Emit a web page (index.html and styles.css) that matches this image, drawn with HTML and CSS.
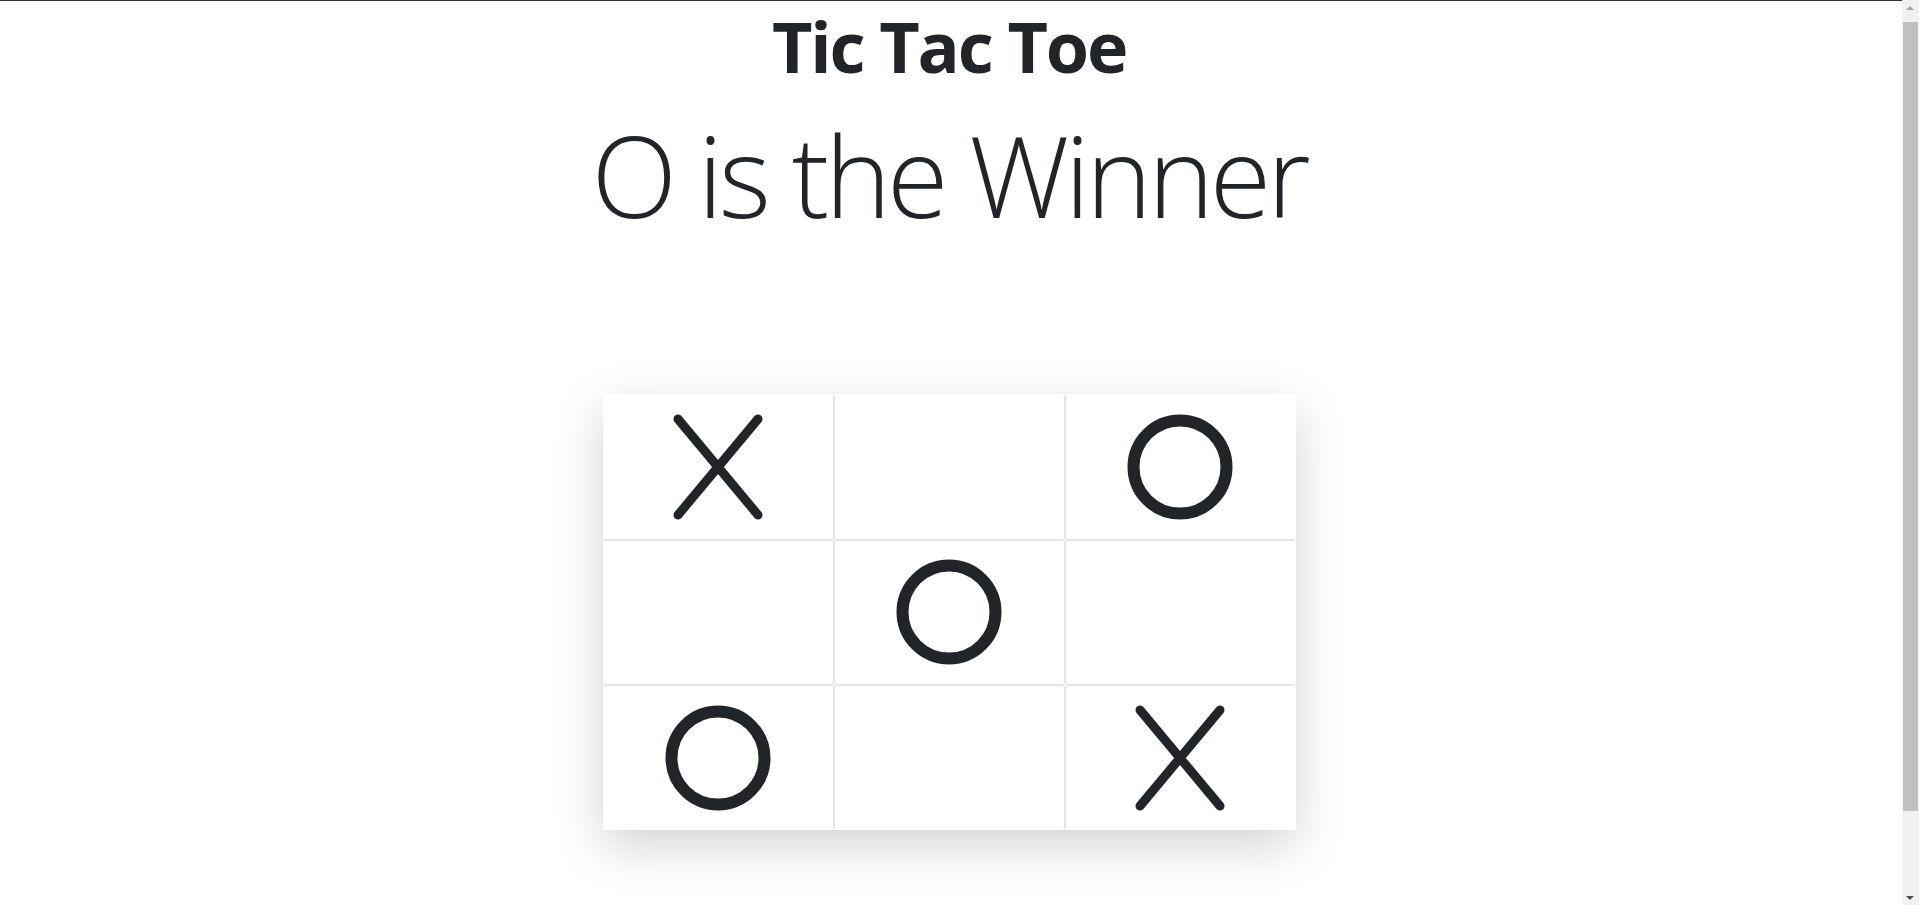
FILE: index.html
```html
<!DOCTYPE html>
<html lang="en">
<head>
<meta charset="utf-8">
<title>Tic Tac Toe</title>
<link rel="stylesheet" href="styles.css">
</head>
<body>
<main class="app">
  <h1 class="title">Tic Tac Toe</h1>
  <p class="status">O is the Winner</p>
  <div class="board">
    <div class="cell"><svg class="mark" viewBox="0 0 100 110" width="100" height="110"><path d="M10 7 L90 103 M90 7 L10 103" /></svg></div>
    <div class="cell"></div>
    <div class="cell"><svg class="mark" viewBox="0 0 110 110" width="110" height="110"><circle cx="55" cy="55" r="46.5" /></svg></div>
    <div class="cell"></div>
    <div class="cell"><svg class="mark" viewBox="0 0 110 110" width="110" height="110"><circle cx="55" cy="55" r="46.5" /></svg></div>
    <div class="cell"></div>
    <div class="cell"><svg class="mark" viewBox="0 0 110 110" width="110" height="110"><circle cx="55" cy="55" r="46.5" /></svg></div>
    <div class="cell"></div>
    <div class="cell"><svg class="mark" viewBox="0 0 100 110" width="100" height="110"><path d="M10 7 L90 103 M90 7 L10 103" /></svg></div>
  </div>
</main>
<aside class="scrollbar" aria-hidden="true">
  <span class="arrow arrow-up"></span>
  <span class="thumb"></span>
  <span class="arrow arrow-down"></span>
</aside>
</body>
</html>
```

FILE: styles.css
```css
html {
  border-top: 1px solid #333;
}
body {
  margin: 0;
  font-family: "Open Sans", "Noto Sans", sans-serif;
  color: #212529;
  background: #fff;
}
.app {
  width: calc(100% - 21px);
  display: flex;
  flex-direction: column;
  align-items: center;
  padding-top: 3px;
  padding-bottom: 70px;
}
.title {
  margin: 0;
  font-size: 70px;
  font-weight: 700;
  line-height: 1.2;
  letter-spacing: -2.2px;
}
.status {
  margin: 20px 0 0;
  font-size: 112px;
  font-weight: 300;
  line-height: 1.2;
  letter-spacing: -4.2px;
}
.board {
  margin-top: 152px;
  width: 693px;
  display: grid;
  grid-template-columns: repeat(3, 1fr);
  grid-template-rows: repeat(3, 145.3px);
  background: #fff;
  box-shadow: 0 1rem 3rem rgba(0, 0, 0, 0.175);
}
.cell {
  display: flex;
  align-items: center;
  justify-content: center;
  border: 1px solid #e2e5e9;
  border-radius: 3px;
}
.cell:nth-child(3n+1) { border-left-color: transparent; }
.cell:nth-child(3n) { border-right-color: transparent; }
.cell:nth-child(-n+3) { border-top-color: transparent; }
.cell:nth-child(n+7) { border-bottom-color: transparent; }
.mark {
  fill: none;
  stroke: #212529;
}
.mark path {
  stroke-width: 9;
  stroke-linecap: round;
}
.mark circle {
  stroke-width: 12;
}

/* browser-style scrollbar drawn over the right edge */
.scrollbar {
  position: fixed;
  top: 0;
  right: 0;
  bottom: 0;
  width: 17px;
  background: #f1f1f1;
  display: flex;
  flex-direction: column;
  align-items: center;
}
.arrow {
  flex: 0 0 17px;
  width: 17px;
  position: relative;
}
.arrow::after {
  content: "";
  position: absolute;
  left: 4px;
  border-left: 4.5px solid transparent;
  border-right: 4.5px solid transparent;
}
.arrow-up::after {
  top: 6px;
  border-bottom: 4px solid #a3a3a3;
}
.arrow-down {
  margin-top: auto;
}
.arrow-down::after {
  bottom: 5px;
  border-top: 4px solid #505050;
}
.thumb {
  margin-top: 5px;
  width: 15px;
  height: 789px;
  background: #c1c1c1;
}
```
